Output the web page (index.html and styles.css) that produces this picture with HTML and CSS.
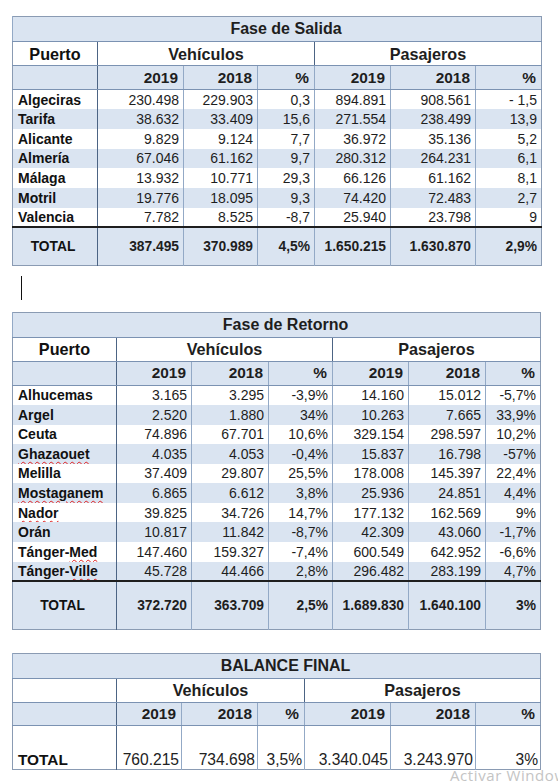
FILE: index.html
```html
<!DOCTYPE html>
<html lang="es">
<head>
    <meta charset="UTF-8">
    <meta name="viewport" content="width=device-width, initial-scale=1.0">
    <title>Operación Paso del Estrecho</title>
<link rel="stylesheet" href="styles.css">
</head>
<body>
    <!-- Fase de Salida -->
    <table class="tabla t1">
        <colgroup>
            <col style="width:85px"><col style="width:86px"><col style="width:74px"><col style="width:57px">
            <col style="width:76px"><col style="width:85px"><col style="width:66px">
        </colgroup>
        <tr class="titulo"><td colspan="7">Fase de Salida</td></tr>
        <tr class="grupo"><td class="puerto">Puerto</td><td colspan="3" class="sep">Vehículos</td><td colspan="3">Pasajeros</td></tr>
        <tr class="anios"><td class="puerto"></td><td>2019</td><td>2018</td><td>%</td><td>2019</td><td>2018</td><td>%</td></tr>
        <tr><td class="puerto">Algeciras</td><td>230.498</td><td>229.903</td><td>0,3</td><td>894.891</td><td>908.561</td><td>- 1,5</td></tr>
        <tr class="par"><td class="puerto">Tarifa</td><td>38.632</td><td>33.409</td><td>15,6</td><td>271.554</td><td>238.499</td><td>13,9</td></tr>
        <tr><td class="puerto">Alicante</td><td>9.829</td><td>9.124</td><td>7,7</td><td>36.972</td><td>35.136</td><td>5,2</td></tr>
        <tr class="par"><td class="puerto">Almería</td><td>67.046</td><td>61.162</td><td>9,7</td><td>280.312</td><td>264.231</td><td>6,1</td></tr>
        <tr><td class="puerto">Málaga</td><td>13.932</td><td>10.771</td><td>29,3</td><td>66.126</td><td>61.162</td><td>8,1</td></tr>
        <tr class="par"><td class="puerto">Motril</td><td>19.776</td><td>18.095</td><td>9,3</td><td>74.420</td><td>72.483</td><td>2,7</td></tr>
        <tr><td class="puerto">Valencia</td><td>7.782</td><td>8.525</td><td>-8,7</td><td>25.940</td><td>23.798</td><td>9</td></tr>
        <tr class="total"><td class="puerto">TOTAL</td><td>387.495</td><td>370.989</td><td>4,5%</td><td>1.650.215</td><td>1.630.870</td><td>2,9%</td></tr>
    </table>

    <div class="cursor"></div>

    <!-- Fase de Retorno -->
    <table class="tabla t2">
        <colgroup>
            <col style="width:104px"><col style="width:75px"><col style="width:77px"><col style="width:64px">
            <col style="width:76px"><col style="width:77px"><col style="width:55px">
        </colgroup>
        <tr class="titulo"><td colspan="7">Fase de Retorno</td></tr>
        <tr class="grupo"><td class="puerto">Puerto</td><td colspan="3" class="sep">Vehículos</td><td colspan="3">Pasajeros</td></tr>
        <tr class="anios"><td class="puerto"></td><td>2019</td><td>2018</td><td>%</td><td>2019</td><td>2018</td><td>%</td></tr>
        <tr><td class="puerto">Alhucemas</td><td>3.165</td><td>3.295</td><td>-3,9%</td><td>14.160</td><td>15.012</td><td>-5,7%</td></tr>
        <tr class="par"><td class="puerto">Argel</td><td>2.520</td><td>1.880</td><td>34%</td><td>10.263</td><td>7.665</td><td>33,9%</td></tr>
        <tr><td class="puerto">Ceuta</td><td>74.896</td><td>67.701</td><td>10,6%</td><td>329.154</td><td>298.597</td><td>10,2%</td></tr>
        <tr class="par"><td class="puerto"><span class="err">Ghazaouet</span></td><td>4.035</td><td>4.053</td><td>-0,4%</td><td>15.837</td><td>16.798</td><td>-57%</td></tr>
        <tr><td class="puerto">Melilla</td><td>37.409</td><td>29.807</td><td>25,5%</td><td>178.008</td><td>145.397</td><td>22,4%</td></tr>
        <tr class="par"><td class="puerto"><span class="err">Mostaganem</span></td><td>6.865</td><td>6.612</td><td>3,8%</td><td>25.936</td><td>24.851</td><td>4,4%</td></tr>
        <tr><td class="puerto"><span class="err">Nador</span></td><td>39.825</td><td>34.726</td><td>14,7%</td><td>177.132</td><td>162.569</td><td>9%</td></tr>
        <tr class="par"><td class="puerto">Orán</td><td>10.817</td><td>11.842</td><td>-8,7%</td><td>42.309</td><td>43.060</td><td>-1,7%</td></tr>
        <tr><td class="puerto">Tánger-<span class="err">Med</span></td><td>147.460</td><td>159.327</td><td>-7,4%</td><td>600.549</td><td>642.952</td><td>-6,6%</td></tr>
        <tr class="par"><td class="puerto">Tánger-<span class="err">Ville</span></td><td>45.728</td><td>44.466</td><td>2,8%</td><td>296.482</td><td>283.199</td><td>4,7%</td></tr>
        <tr class="total"><td class="puerto">TOTAL</td><td>372.720</td><td>363.709</td><td>2,5%</td><td>1.689.830</td><td>1.640.100</td><td>3%</td></tr>
    </table>

    <!-- Balance final -->
    <table class="tabla t3">
        <colgroup>
            <col style="width:104px"><col style="width:65px"><col style="width:76px"><col style="width:47px">
            <col style="width:86px"><col style="width:85px"><col style="width:65px">
        </colgroup>
        <tr class="titulo"><td colspan="7">BALANCE FINAL</td></tr>
        <tr class="grupo"><td class="puerto"></td><td colspan="3" class="sep">Vehículos</td><td colspan="3">Pasajeros</td></tr>
        <tr class="anios"><td class="puerto"></td><td>2019</td><td>2018</td><td>%</td><td>2019</td><td>2018</td><td>%</td></tr>
        <tr class="final"><td class="puerto">TOTAL</td><td>760.215</td><td>734.698</td><td>3,5%</td><td>3.340.045</td><td>3.243.970</td><td>3%</td></tr>
    </table>

    <div class="marca">Activar Windows</div>
</body>
</html>
```

FILE: styles.css
```css
body{
    margin: 0;
    padding: 16px 0 0 12px;
    background-color: #fff;
    font-family: "Liberation Sans", Arial, sans-serif;
    color: #1e1e1e;
    position: relative;
    height: 783px;
    box-sizing: border-box;
    overflow: hidden;
}
.tabla{
    border-collapse: collapse;
    table-layout: fixed;
    width: 529px;
    border: 1px solid #8a9bb3;
}
.tabla td{
    padding: 0 4px 0 0;
    text-align: right;
    font-size: 14px;
    line-height: 16px;
    border-left: 1px solid #93a9c6;
    white-space: nowrap;
    overflow: hidden;
}
.tabla td.puerto{
    text-align: left;
    padding-left: 5px;
    font-weight: 700;
    color: #111;
    border-left: none;
    border-right: 1px solid #4c6484;
}
.tabla tr{
    height: 19.7px;
}
.t2 tr{
    height: 19.6px;
}
.par td{
    background-color: #dae4f1;
}
/* filas de cabecera */
.tabla .titulo{
    height: 25px;
}
.titulo td{
    background-color: #dae4f1;
    text-align: center;
    font-weight: 700;
    font-size: 16px;
    line-height: 18px;
    padding-left: 22px;
    border-bottom: 1px solid #7b92b2;
}
.tabla .grupo{
    height: 24px;
}
.grupo td{
    text-align: center;
    font-weight: 700;
    font-size: 16.2px;
    line-height: 18px;
    padding: 0;
    border-bottom: 1px solid #7b92b2;
}
.grupo td.puerto{
    text-align: center;
    padding: 0;
}
.grupo td.sep{
    border-right: 1px solid #4c6484;
}
.tabla .anios{
    height: 24px;
}
.anios td{
    background-color: #dae4f1;
    font-weight: 700;
    font-size: 15.4px;
    line-height: 18px;
    padding-right: 5px;
    border-bottom: 1px solid #7b92b2;
}
.tabla .total{
    height: 38px;
}
.total td{
    background-color: #dae4f1;
    font-weight: 700;
    font-size: 13.8px;
    border-top: 2px solid #1e1e1e;
}
.total td.puerto{
    text-align: center;
    padding-left: 0;
}
.t2 .total{
    height: 48px;
}
.t3 .anios{
    height: 23px;
}
.tabla .final{
    height: 44px;
}
.final td{
    vertical-align: bottom;
    font-size: 15.6px;
    line-height: 17px;
    padding-bottom: 1px;
    padding-right: 2px;
    color: #222;
}
.final td.puerto{
    font-size: 15.4px;
}
.err{
    text-decoration: underline wavy #e02020;
    text-decoration-thickness: 1px;
    text-underline-offset: 2px;
}
.cursor{
    width: 1px;
    height: 24px;
    background-color: #111;
    margin: 10px 0 12px 9px;
}
.t3{
    margin-top: 23px;
}
.marca{
    position: absolute;
    left: 450px;
    top: 769px;
    font-family: "Open Sans", "Noto Sans", sans-serif;
    font-size: 15px;
    line-height: 12px;
    letter-spacing: 0.6px;
    color: #c4c4c4;
    white-space: nowrap;
}
```
